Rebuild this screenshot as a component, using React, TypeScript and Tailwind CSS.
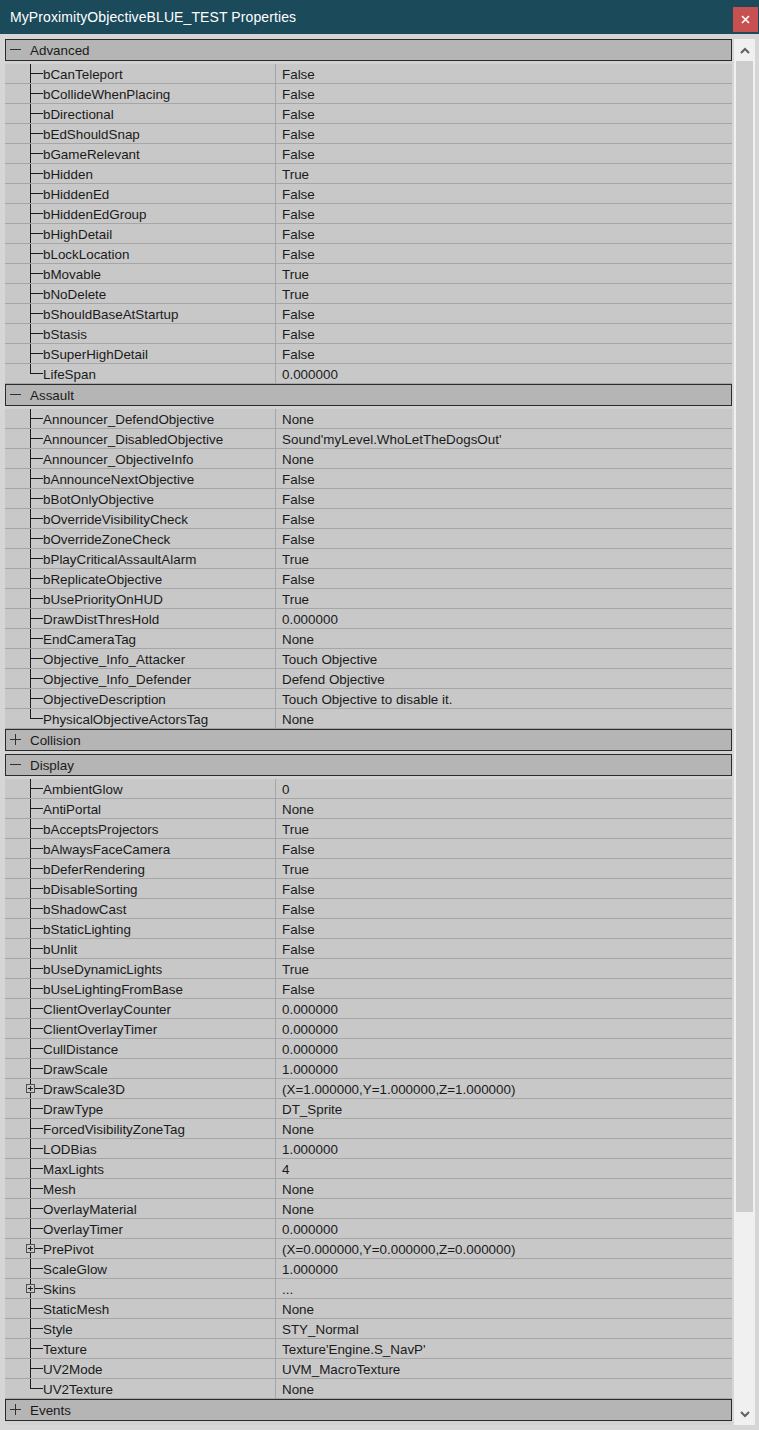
import React from 'react';

type Prop = { name: string; value: string; expandable?: boolean };
type Category = { title: string; open: boolean; props: Prop[] };

const categories: Category[] = [
  {
    title: 'Advanced',
    open: true,
    props: [
      { name: 'bCanTeleport', value: 'False' },
      { name: 'bCollideWhenPlacing', value: 'False' },
      { name: 'bDirectional', value: 'False' },
      { name: 'bEdShouldSnap', value: 'False' },
      { name: 'bGameRelevant', value: 'False' },
      { name: 'bHidden', value: 'True' },
      { name: 'bHiddenEd', value: 'False' },
      { name: 'bHiddenEdGroup', value: 'False' },
      { name: 'bHighDetail', value: 'False' },
      { name: 'bLockLocation', value: 'False' },
      { name: 'bMovable', value: 'True' },
      { name: 'bNoDelete', value: 'True' },
      { name: 'bShouldBaseAtStartup', value: 'False' },
      { name: 'bStasis', value: 'False' },
      { name: 'bSuperHighDetail', value: 'False' },
      { name: 'LifeSpan', value: '0.000000' },
    ],
  },
  {
    title: 'Assault',
    open: true,
    props: [
      { name: 'Announcer_DefendObjective', value: 'None' },
      { name: 'Announcer_DisabledObjective', value: "Sound'myLevel.WhoLetTheDogsOut'" },
      { name: 'Announcer_ObjectiveInfo', value: 'None' },
      { name: 'bAnnounceNextObjective', value: 'False' },
      { name: 'bBotOnlyObjective', value: 'False' },
      { name: 'bOverrideVisibilityCheck', value: 'False' },
      { name: 'bOverrideZoneCheck', value: 'False' },
      { name: 'bPlayCriticalAssaultAlarm', value: 'True' },
      { name: 'bReplicateObjective', value: 'False' },
      { name: 'bUsePriorityOnHUD', value: 'True' },
      { name: 'DrawDistThresHold', value: '0.000000' },
      { name: 'EndCameraTag', value: 'None' },
      { name: 'Objective_Info_Attacker', value: 'Touch Objective' },
      { name: 'Objective_Info_Defender', value: 'Defend Objective' },
      { name: 'ObjectiveDescription', value: 'Touch Objective to disable it.' },
      { name: 'PhysicalObjectiveActorsTag', value: 'None' },
    ],
  },
  { title: 'Collision', open: false, props: [] },
  {
    title: 'Display',
    open: true,
    props: [
      { name: 'AmbientGlow', value: '0' },
      { name: 'AntiPortal', value: 'None' },
      { name: 'bAcceptsProjectors', value: 'True' },
      { name: 'bAlwaysFaceCamera', value: 'False' },
      { name: 'bDeferRendering', value: 'True' },
      { name: 'bDisableSorting', value: 'False' },
      { name: 'bShadowCast', value: 'False' },
      { name: 'bStaticLighting', value: 'False' },
      { name: 'bUnlit', value: 'False' },
      { name: 'bUseDynamicLights', value: 'True' },
      { name: 'bUseLightingFromBase', value: 'False' },
      { name: 'ClientOverlayCounter', value: '0.000000' },
      { name: 'ClientOverlayTimer', value: '0.000000' },
      { name: 'CullDistance', value: '0.000000' },
      { name: 'DrawScale', value: '1.000000' },
      { name: 'DrawScale3D', value: '(X=1.000000,Y=1.000000,Z=1.000000)', expandable: true },
      { name: 'DrawType', value: 'DT_Sprite' },
      { name: 'ForcedVisibilityZoneTag', value: 'None' },
      { name: 'LODBias', value: '1.000000' },
      { name: 'MaxLights', value: '4' },
      { name: 'Mesh', value: 'None' },
      { name: 'OverlayMaterial', value: 'None' },
      { name: 'OverlayTimer', value: '0.000000' },
      { name: 'PrePivot', value: '(X=0.000000,Y=0.000000,Z=0.000000)', expandable: true },
      { name: 'ScaleGlow', value: '1.000000' },
      { name: 'Skins', value: '...', expandable: true },
      { name: 'StaticMesh', value: 'None' },
      { name: 'Style', value: 'STY_Normal' },
      { name: 'Texture', value: "Texture'Engine.S_NavP'" },
      { name: 'UV2Mode', value: 'UVM_MacroTexture' },
      { name: 'UV2Texture', value: 'None' },
    ],
  },
  { title: 'Events', open: false, props: [] },
];

// tree connector drawn in the left gutter of each property row
function TreeLine({ last, expandable }: { last: boolean; expandable?: boolean }) {
  return (
    <svg width="38" height="20" className="shrink-0 block" shapeRendering="crispEdges">
      <line x1="25.5" y1="0" x2="25.5" y2={last ? 10 : 20} stroke="#1c1c1c" />
      {expandable ? (
        <>
          <rect x="21.5" y="5.5" width="8" height="8" fill="#c8c8c8" stroke="#505050" />
          <line x1="23" y1="9.5" x2="28" y2="9.5" stroke="#1c1c1c" />
          <line x1="25.5" y1="7" x2="25.5" y2="12" stroke="#1c1c1c" />
          <line x1="30" y1="9.5" x2="38" y2="9.5" stroke="#1c1c1c" />
        </>
      ) : (
        <line x1="25.5" y1="9.5" x2="38" y2="9.5" stroke="#1c1c1c" />
      )}
    </svg>
  );
}

function CategoryHeader({ title, open }: { title: string; open: boolean }) {
  return (
    <div className="h-[25px] pb-[3px] bg-[#d2d2d2]">
      <div className="h-[22px] flex items-center border border-[#2b2b2b] bg-[#b5b5b5]">
        <svg width="24" height="20" className="shrink-0 block" shapeRendering="crispEdges">
          <line x1="4" y1="9.5" x2="15" y2="9.5" stroke="#303030" />
          {!open && <line x1="9.5" y1="4" x2="9.5" y2="15" stroke="#303030" />}
        </svg>
        <span className="text-[13.4px] text-[#1a1a1a] leading-none pt-[1px]">{title}</span>
      </div>
    </div>
  );
}

function PropRow({ prop, last }: { prop: Prop; last: boolean }) {
  return (
    <div className="flex h-[20px] bg-[#c8c8c8] border-b border-[#a6a6a6]">
      <div className="w-[271px] shrink-0 flex items-center border-r border-[#a6a6a6] overflow-hidden">
        <TreeLine last={last} expandable={prop.expandable} />
        <span className="text-[13.4px] text-[#1a1a1a] leading-none pt-[2px] whitespace-nowrap">{prop.name}</span>
      </div>
      <div className="flex-1 flex items-center pl-[6px] overflow-hidden">
        <span className="text-[13.4px] text-[#1a1a1a] leading-none pt-[2px] whitespace-nowrap">{prop.value}</span>
      </div>
    </div>
  );
}

function Chevron({ up }: { up: boolean }) {
  return (
    <svg width="10" height="7" viewBox="0 0 10 7">
      <path
        d={up ? 'M1 6 L5 2 L9 6' : 'M1 1 L5 5 L9 1'}
        fill="none"
        stroke="#606060"
        strokeWidth="2"
      />
    </svg>
  );
}

export default function App() {
  return (
    <div
      className="w-[759px] h-[1430px] flex flex-col bg-[#d6d6d6] overflow-hidden"
      style={{ fontFamily: '"Liberation Sans", Arial, sans-serif' }}
    >
      <div className="h-[34px] shrink-0 bg-[#1b4a5b] flex items-center justify-between pl-[10px] pr-[1px]">
        <span className="text-[14px] text-white tracking-[0.1px]">MyProximityObjectiveBLUE_TEST Properties</span>
        <div className="w-[25px] h-[25px] bg-[#c75151] flex items-center justify-center mt-[4px]">
          <svg width="9" height="9" viewBox="0 0 9 9">
            <path d="M1 1 L8 8 M8 1 L1 8" stroke="white" strokeWidth="1.6" />
          </svg>
        </div>
      </div>

      <div className="flex-1 flex pt-[5px] pb-[5px] pl-[5px] pr-[4px] gap-[2px] min-h-0">
        <div className="flex-1 flex flex-col bg-[#d2d2d2] overflow-hidden">
          {categories.map(cat => (
            <div key={cat.title}>
              <CategoryHeader title={cat.title} open={cat.open} />
              {cat.open &&
                cat.props.map((p, i) => (
                  <PropRow key={p.name} prop={p} last={i === cat.props.length - 1} />
                ))}
            </div>
          ))}
        </div>

        <div className="w-[21px] shrink-0 flex flex-col bg-[#f0f0f0]">
          <div className="h-[22px] flex items-center justify-center">
            <Chevron up />
          </div>
          <div className="px-[2px]">
            <div className="h-[1151px] bg-[#cdcdcd]" />
          </div>
          <div className="flex-1" />
          <div className="h-[22px] flex items-center justify-center">
            <Chevron up={false} />
          </div>
        </div>
      </div>
    </div>
  );
}
